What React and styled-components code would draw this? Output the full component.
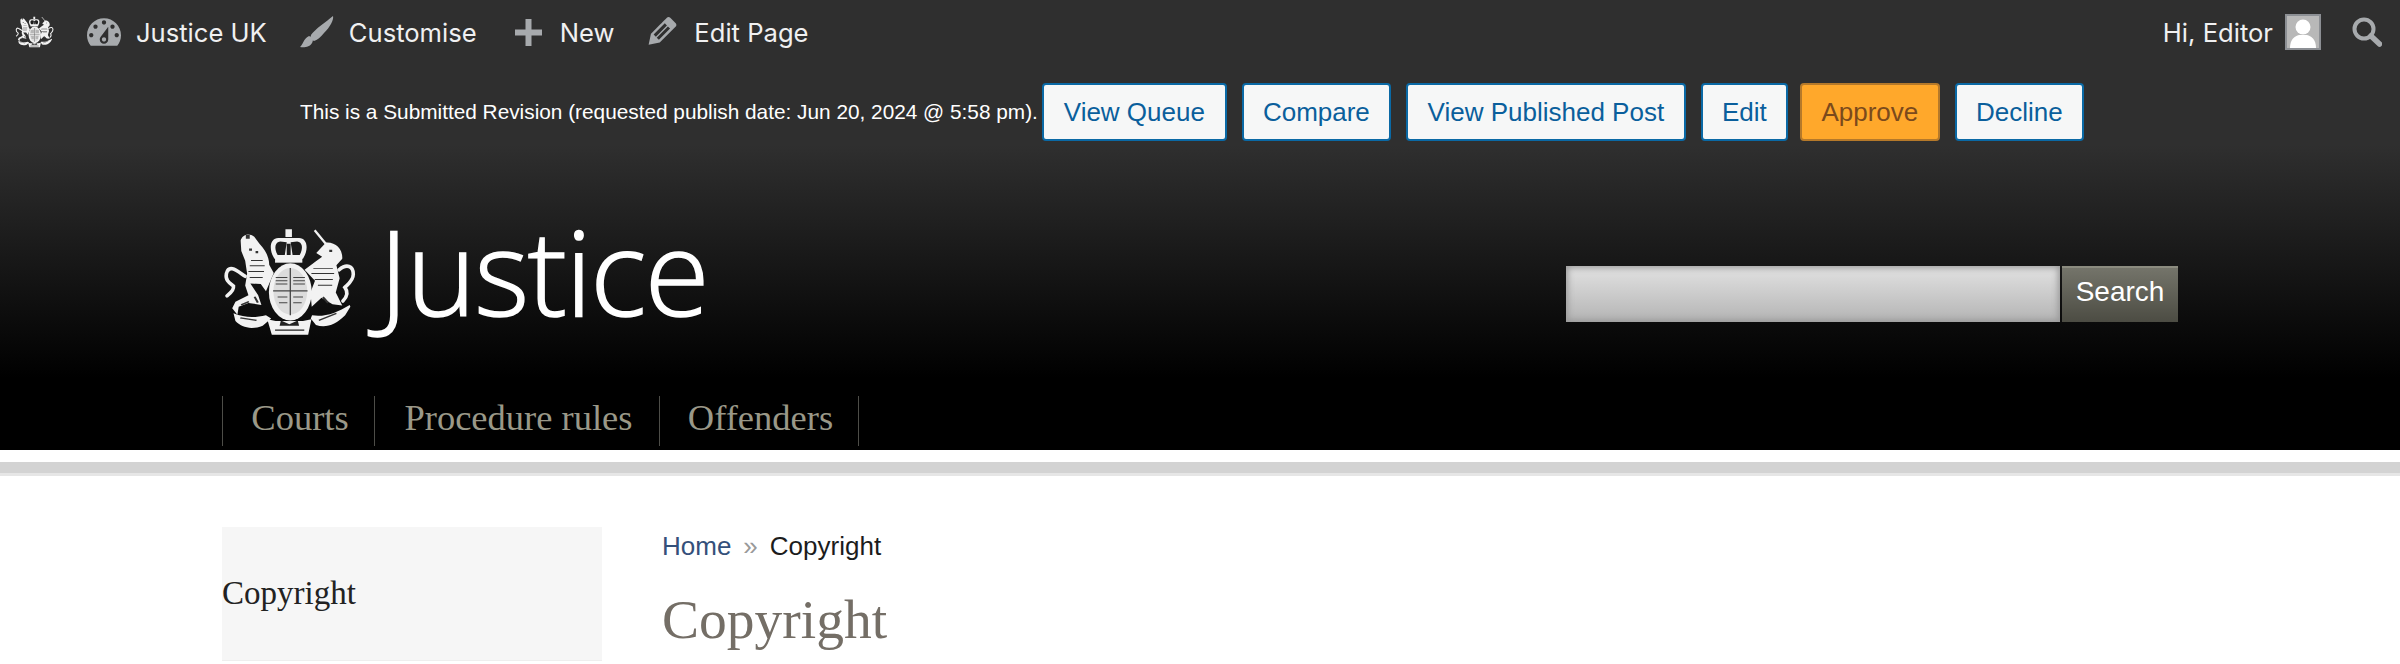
import styled, { createGlobalStyle } from "styled-components";

const GlobalStyle = createGlobalStyle`
  html, body { margin: 0; padding: 0; background: #fff; }
`

const Crest = ({ className }) => (
  <svg className={className} viewBox="15 15 415 345" fill="#f2f2f2">
    {/* crown */}
    <path d="M210 25h20v24h-20z" />
    <path d="M176 116c-20-32-12-66 14-64h60c26-2 34 32 14 64z" />
    <path d="M186 104c-12-20-8-40 8-41l20 2-6 39zM254 104c12-20 8-40-8-41l-20 2 6 39zM214 70h12v34h-12z" fill="#1c1c1c" />
    <path d="M178 112h84v16h-84z" />
    {/* shield and garter */}
    <ellipse cx="225" cy="218" rx="66" ry="88" />
    <ellipse cx="225" cy="216" rx="52" ry="72" fill="#dcdcdc" />
    <path d="M223 144h4v146h-4zM172 213h106v4H172zM180 172h36v3h-36zM180 182h36v3h-36zM180 192h36v3h-36zM234 172h36v3h-36zM234 182h36v3h-36zM234 192h36v3h-36zM186 232h30v3h-30zM190 250h26v3h-26zM234 232h30v3h-30zM234 250h26v3h-26z" fill="#444" />
    {/* lion */}
    <path d="M72 60c4-16 24-26 42-12l16 22c20 20 30 44 30 64l14 26-24 56-16-22-32-2 24 36 10 30-40-6-30 12-4 24-16-20 10-20 40-20-10-30 6-36-6-40-12-30z" />
    <path d="M88 42h12v12H88zM98 84h9v7h-9zM118 92h8v7h-8zM104 120h36v3h-36zM100 136h46v3h-46zM96 154h48v3H96zM100 172h40v3h-40zM72 256l24-10 3 4-24 10zM118 232l10 18-6 2-10-18z" fill="#333" />
    <path d="M86 170c-24-16-50-40-58-8-4 22 12 30 22 38 2 14-10 22-20 30" fill="none" stroke="#f2f2f2" strokeWidth="11" strokeLinecap="round" />
    {/* unicorn */}
    <path d="M300 28l38 46" fill="none" stroke="#f2f2f2" strokeWidth="7" />
    <path d="M335 66c30-2 52 20 50 50l-18 20 10 40-12 44 20 40-30-4-34-20-30 28-4-44 14-36-32-34 34-26 20-14-18-12z" />
    <path d="M345 88h9v7h-9zM296 144h60v3h-60zM290 160h70v3h-70zM300 178h56v3h-56zM310 196h44v3h-44zM328 232l16 18-5 4-16-18z" fill="#333" />
    <path d="M375 150c24-20 44-12 44 14 0 20-16 30-26 40 12 16 6 30-6 42" fill="none" stroke="#f2f2f2" strokeWidth="11" strokeLinecap="round" />
    {/* motto scroll */}
    <path d="M50 284c34 14 66 14 100 6l16 10-26 22c-34 14-66 6-84-14zM292 290c40 6 76-8 116-32l2 6-16 26c-30 30-60 40-90 30l-16-20z" />
    <path d="M72 296l50 8-2 4-50-8zM312 304l54-22 2 4-54 22z" fill="#333" />
    <path d="M154 302l26 6h84l26-6-10 48H168z" />
    <path d="M178 334h90v4h-90zM196 306l26 12 26-12 4 16h-60z" fill="#222" />
  </svg>
)

const DashIcon = () => (
  <AdminIcon viewBox="2 3 16 13" $w={34} $h={28}>
    <path fillRule="evenodd" d="M3.760 16h12.480c1.100-1.370 1.760-3.110 1.760-5 0-4.420-3.580-8-8-8s-8 3.580-8 8c0 1.890.660 3.630 1.760 5zM10 4c.550 0 1 .450 1 1s-.450 1-1 1-1-.450-1-1 .450-1 1-1zM6 6c.550 0 1 .450 1 1s-.450 1-1 1-1-.450-1-1 .450-1 1-1zm8 0c.550 0 1 .450 1 1s-.450 1-1 1-1-.450-1-1 .450-1 1-1zm-5.370 5.550L12 7v6c0 1.100-.900 2-2 2s-2-.900-2-2c0-.570.240-1.080.630-1.450zM4 10c.550 0 1 .450 1 1s-.450 1-1 1-1-.450-1-1 .450-1 1-1zm12 0c.550 0 1 .450 1 1s-.450 1-1 1-1-.450-1-1 .450-1 1-1zm-5 3c0-.550-.450-1-1-1s-1 .450-1 1 .450 1 1 1 1-.450 1-1z" />
  </AdminIcon>
)

const BrushIcon = () => (
  <AdminIcon viewBox="0 0 34 32" $w={34} $h={32}>
    <path d="M33 0c1 4-3 11-9 17-3 4-7 7-10 8-3-1-4-3-3-6C14 14 27 5 33 0zM9 20c3 1 5 4 3 7-2 4-8 5-12 4 3-2 3-8 9-11z" />
  </AdminIcon>
)

const PlusIcon = () => (
  <AdminIcon viewBox="0 0 27 27" $w={27} $h={27}>
    <path d="M10.500 0h6v10.500H27v6H16.500V27h-6V16.500H0v-6h10.500z" />
  </AdminIcon>
)

const PencilIcon = () => (
  <AdminIcon viewBox="3 3 14 15" $w={29} $h={30}>
    <path fillRule="evenodd" d="M13.890 3.390l2.710 2.720c.460.460.420 1.240.030 1.640l-8.010 8.020-5.560 1.160 1.160-5.580s7.600-7.630 7.990-8.030c.390-.390 1.220-.390 1.680.070zm-2.730 2.790l-5.590 5.610 1.110 1.110 5.540-5.650zm-2.970 8.230l5.580-5.600-1.070-1.080-5.590 5.600z" />
  </AdminIcon>
)

const MENU = [
  { label: "Justice UK", icon: <DashIcon />, gap: 15, after: 33 },
  { label: "Customise", icon: <BrushIcon />, gap: 15, after: 38 },
  { label: "New", icon: <PlusIcon />, gap: 18, after: 34 },
  { label: "Edit Page", icon: <PencilIcon />, gap: 17, after: 0 },
]

const ACTIONS = [
  { label: "View Queue", width: 185 },
  { label: "Compare", width: 149 },
  { label: "View Published Post", width: 280 },
  { label: "Edit", width: 87 },
  { label: "Approve", width: 140, approve: true },
  { label: "Decline", width: 129 },
]

function App() {
  return (
    <Page>
      <GlobalStyle />
      <Header>
        <AdminBar>
          <AdminCrest />
          {MENU.map((item) => (
            <MenuItem key={item.label} $gap={item.gap} $after={item.after}>
              {item.icon}
              {item.label}
            </MenuItem>
          ))}
          <AdminRight>
            Hi, Editor
            <Avatar>
              <svg viewBox="0 0 32 32" fill="#fff">
                <circle cx="16" cy="11" r="7.500" />
                <path d="M3 32c0-9 5-12 9-13h8c4 1 9 4 9 13z" />
              </svg>
            </Avatar>
            <SearchIcon viewBox="0 0 30 30" fill="none" stroke="#a7aaad">
              <circle cx="12" cy="12" r="9.500" strokeWidth="4" />
              <path d="M19 19l8.500 8" strokeWidth="5.500" strokeLinecap="round" />
            </SearchIcon>
          </AdminRight>
        </AdminBar>
        <Notice>
          <NoticeText>This is a Submitted Revision (requested publish date: Jun 20, 2024 @ 5:58 pm).</NoticeText>
          {ACTIONS.map((action) => (
            <ActionButton key={action.label} $width={action.width} $approve={action.approve}>
              {action.label}
            </ActionButton>
          ))}
        </Notice>
        <Masthead>
          <Logo>
            <LogoCrest />
            <LogoText>Justice</LogoText>
          </Logo>
          <SearchForm>
            <SearchInput />
            <SearchButton>Search</SearchButton>
          </SearchForm>
        </Masthead>
        <MainNav>
          <NavItem $width={152}>Courts</NavItem>
          <NavItem $width={285}>Procedure rules</NavItem>
          <NavItem $width={199}>Offenders</NavItem>
        </MainNav>
      </Header>
      <Rule />
      <Content>
        <Sidebar>Copyright</Sidebar>
        <Main>
          <Breadcrumb>
            <a>Home</a>
            <span>»</span>
            Copyright
          </Breadcrumb>
          <Title>Copyright</Title>
        </Main>
      </Content>
    </Page>
  )
}

const Page = styled.div`
  width: 2400px;
  height: 664px;
  overflow: hidden;
  background: #fff;
`

const Header = styled.header`
  height: 450px;
  background: linear-gradient(#2f2f2f 145px, #000 378px);
`

const AdminBar = styled.div`
  height: 64px;
  display: flex;
  align-items: center;
  padding: 0 18px 0 15px;
  font-family: "Inter", sans-serif;
  font-size: 25.600px;
  color: #f0f0f1;
`

const AdminCrest = styled(Crest)`
  width: 39px;
  height: 36px;
  margin-right: 33px;
`

const MenuItem = styled.div`
  display: flex;
  align-items: center;
  gap: ${(p) => p.$gap}px;
  margin-right: ${(p) => p.$after}px;
`

const AdminIcon = styled.svg`
  width: ${(p) => p.$w}px;
  height: ${(p) => p.$h}px;
  fill: #a7aaad;
  flex: none;
`

const AdminRight = styled.div`
  margin-left: auto;
  display: flex;
  align-items: center;
`

const Avatar = styled.div`
  width: 32px;
  height: 32px;
  margin-left: 12px;
  border: 2px solid #8c8f94;
  background: #b8b8b8;
  overflow: hidden;
  svg { display: block; }
`

const SearchIcon = styled.svg`
  width: 30px;
  height: 30px;
  margin-left: 31px;
`

const Notice = styled.div`
  height: 58px;
  margin-top: 19px;
  padding-left: 300px;
  display: flex;
  align-items: center;
  gap: 15px;
  font-family: "Liberation Sans", Arial, sans-serif;
`

const NoticeText = styled.span`
  margin-right: -11px;
  font-size: 20.800px;
  color: #fff;
  white-space: nowrap;
`

const ActionButton = styled.button`
  box-sizing: border-box;
  width: ${(p) => p.$width}px;
  height: 58px;
  padding: 0;
  margin-left: ${(p) => (p.$approve ? "-3px" : "0")};
  border-radius: 4px;
  border: 2px solid ${(p) => (p.$approve ? "#b5792a" : "#0a69a5")};
  background: ${(p) => (p.$approve ? "#ffa82b" : "#f6f7f7")};
  color: ${(p) => (p.$approve ? "#7b4a1c" : "#0a5f9c")};
  font-family: "Liberation Sans", Arial, sans-serif;
  font-size: 26px;
`

const Masthead = styled.div`
  height: 256px;
  padding: 0 222px;
  display: flex;
  justify-content: space-between;
`

const Logo = styled.div`
  display: flex;
  align-items: flex-start;
  padding-top: 85px;
`

const LogoCrest = styled(Crest)`
  width: 135px;
  height: 112px;
  filter: blur(0.5px);
`

const LogoText = styled.div`
  margin: -40px 0 0 22px;
  font-family: "Open Sans", sans-serif;
  font-weight: 300;
  font-size: 118px;
  letter-spacing: -1.700px;
  line-height: 170px;
  color: #fff;
  -webkit-text-stroke: 1.500px #fff;
`

const SearchForm = styled.form`
  display: flex;
  gap: 2px;
  padding-top: 125px;
`

const SearchInput = styled.div`
  box-sizing: border-box;
  width: 494px;
  height: 56px;
  background: linear-gradient(#e2e2e2, #b4b4b4);
  box-shadow: inset 0 0 6px 2px #999;
`

const SearchButton = styled.div`
  box-sizing: border-box;
  width: 116px;
  height: 56px;
  border-top: 2px solid #8b8b7f;
  background: linear-gradient(#74746a, #4c4c43);
  color: #fff;
  font-family: "Liberation Sans", Arial, sans-serif;
  font-size: 28px;
  line-height: 48px;
  text-align: center;
`

const MainNav = styled.nav`
  height: 50px;
  padding-left: 222px;
  margin-top: -1px;
  display: flex;
`

const NavItem = styled.div`
  box-sizing: border-box;
  width: ${(p) => p.$width + 1}px;
  height: 50px;
  margin-right: -1px;
  padding-left: 3px;
  border-left: 1px solid #4d4d48;
  border-right: 1px solid #4d4d48;
  color: #9a9888;
  font-family: "Liberation Serif", Georgia, serif;
  font-size: 36.500px;
  line-height: 44px;
  text-align: center;
`

const Rule = styled.div`
  height: 11px;
  margin-top: 12px;
  background: #d3d3d3;
  border-bottom: 3px solid #e6e6e6;
`

const Content = styled.div`
  display: flex;
  gap: 59px;
  padding: 51px 222px 0;
`

const Sidebar = styled.aside`
  box-sizing: border-box;
  width: 380px;
  height: 134px;
  flex: none;
  background: #f6f6f6;
  border-bottom: 1px solid #eeeeee;
  color: #222;
  font-family: "Liberation Serif", Georgia, serif;
  font-size: 33px;
  line-height: 133px;
`

const Main = styled.main`
  flex: 1;
  padding: 3px 0 0 1px;
`

const Breadcrumb = styled.div`
  font-family: "Liberation Sans", Arial, sans-serif;
  font-size: 26px;
  line-height: 32px;
  color: #1c1c1c;
  a { color: #34507a; }
  span { margin: 0 12px; color: #999; }
`

const Title = styled.h1`
  margin: 26px 0 0;
  font-family: "Liberation Serif", Georgia, serif;
  font-weight: normal;
  font-size: 55.500px;
  line-height: 64px;
  color: #746e66;
`

export default App
